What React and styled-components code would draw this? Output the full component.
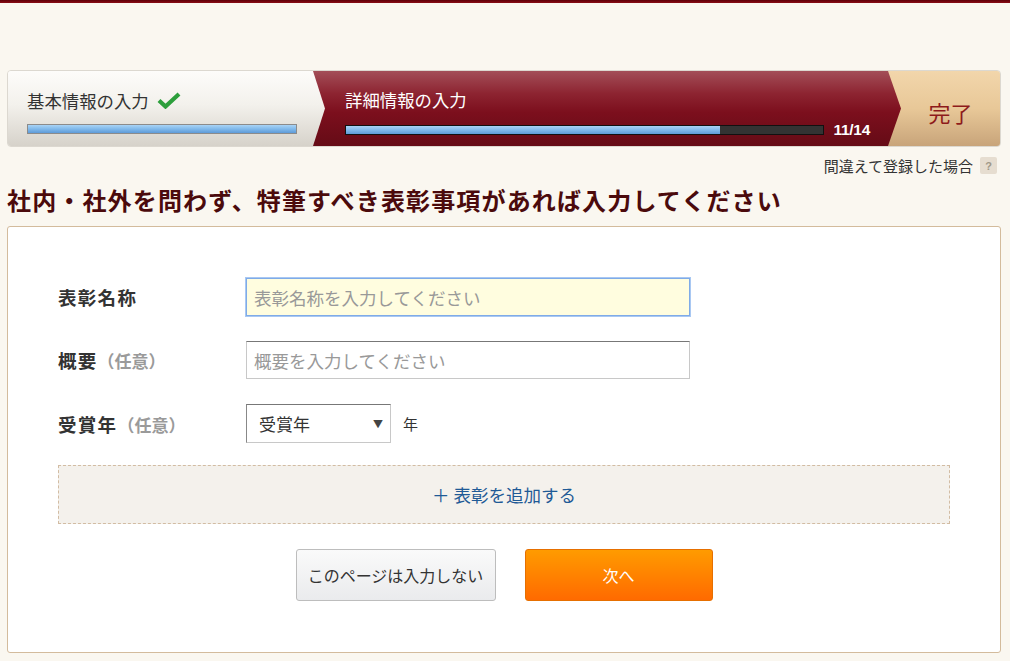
import React from 'react'
import styled, { createGlobalStyle } from 'styled-components'

const GlobalStyle = createGlobalStyle`
  html, body {
    margin: 0;
    padding: 0;
    background: #faf7f0;
  }
  body {
    font-family: "Noto Sans CJK JP", "Noto Sans", "Liberation Sans", sans-serif;
    color: #333;
  }
`

const App = () => {
    return (
        <>
            <GlobalStyle />
            <TopLine />
            <Page>
                <Steps>
                    <StepDone>
                        <StepTitle>
                            基本情報の入力
                            <Check viewBox="0 0 24 17">
                                <path d="M2 8.5 L8.5 14.5 L22 2" fill="none" stroke="#2d9f3c" strokeWidth="4.2" strokeLinejoin="miter" />
                            </Check>
                        </StepTitle>
                        <Bar $dark={false}>
                            <Fill style={{ width: '100%' }} />
                        </Bar>
                    </StepDone>
                    <StepCurrent>
                        <StepTitle $light>詳細情報の入力</StepTitle>
                        <BarRow>
                            <Bar $dark>
                                <Fill style={{ width: `${(11 / 14) * 100}%` }} />
                            </Bar>
                            <Count>11/14</Count>
                        </BarRow>
                    </StepCurrent>
                    <StepLast>完了</StepLast>
                </Steps>

                <HelpRow>
                    間違えて登録した場合
                    <HelpBadge>?</HelpBadge>
                </HelpRow>

                <Heading>社内・社外を問わず、特筆すべき表彰事項があれば入力してください</Heading>

                <Card>
                    <FormRow>
                        <Label>表彰名称</Label>
                        <TextInput $focused placeholder="表彰名称を入力してください" />
                    </FormRow>
                    <FormRow>
                        <Label>概要<Optional>（任意）</Optional></Label>
                        <TextInput placeholder="概要を入力してください" />
                    </FormRow>
                    <FormRow>
                        <Label>受賞年<Optional>（任意）</Optional></Label>
                        <SelectBox>
                            受賞年
                            <Caret>▼</Caret>
                        </SelectBox>
                        <Unit>年</Unit>
                    </FormRow>

                    <AddBox>＋ 表彰を追加する</AddBox>

                    <Buttons>
                        <SkipButton>このページは入力しない</SkipButton>
                        <NextButton>次へ</NextButton>
                    </Buttons>
                </Card>
            </Page>
        </>
    )
}

export default App


const TopLine = styled.div`
  height: 3px;
  background: linear-gradient(#5e0008, #8a0d16);
`

const Page = styled.div`
  width: 994px;
  margin-left: 7px;
  padding-top: 67px;
`

const Steps = styled.div`
  display: flex;
  height: 75px;
  border: 1px solid #dcd8d0;
  border-radius: 4px;
  overflow: hidden;
`

const StepDone = styled.div`
  position: relative;
  z-index: 3;
  width: 317px;
  flex-shrink: 0;
  box-sizing: border-box;
  padding: 17px 28px 0 19px;
  background: linear-gradient(#fdfcfa 0%, #f3f1ec 45%, #d6d2ca 100%);
  clip-path: polygon(0 0, calc(100% - 12px) 0, 100% 50%, calc(100% - 12px) 100%, 0 100%);
`

const StepCurrent = styled.div`
  position: relative;
  z-index: 2;
  flex: 1;
  margin-left: -12px;
  box-sizing: border-box;
  padding: 16px 31px 0 32px;
  background: linear-gradient(#a34e58 0%, #8d2431 30%, #7c0f1d 55%, #650b16 100%);
  clip-path: polygon(0 0, calc(100% - 13px) 0, 100% 50%, calc(100% - 13px) 100%, 0 100%);
`

const StepLast = styled.div`
  position: relative;
  z-index: 1;
  width: 112px;
  flex-shrink: 0;
  margin-left: -13px;
  box-sizing: border-box;
  padding: 6px 0 0 13px;
  display: flex;
  align-items: center;
  justify-content: center;
  font-size: 22px;
  color: #8e1b1b;
  background: linear-gradient(#f2d6ab 0%, #e8c898 50%, #c8a47a 100%);
`

const StepTitle = styled.div`
  display: flex;
  align-items: center;
  height: 24px;
  font-size: 17.4px;
  color: ${props => props.$light ? '#fff' : '#333'};
`

const Check = styled.svg`
  width: 24px;
  height: 17px;
  margin-left: 8px;
`

const BarRow = styled.div`
  display: flex;
  align-items: center;
  margin-top: 10px;
`

const Bar = styled.div`
  flex: 1;
  height: 10px;
  margin-top: ${props => props.$dark ? '0' : '12px'};
  box-sizing: border-box;
  border: 1px solid ${props => props.$dark ? '#111' : '#8b8b8b'};
  background: ${props => props.$dark ? '#333' : '#ddd'};
`

const Fill = styled.div`
  height: 100%;
  background: linear-gradient(#a9d3f5 0%, #84bcec 45%, #5e9bd8 100%);
`

const Count = styled.span`
  margin-left: 10px;
  font-family: "Liberation Sans", "Noto Sans", sans-serif;
  font-size: 15.5px;
  font-weight: bold;
  letter-spacing: -0.3px;
  color: #fff;
`

const HelpRow = styled.div`
  display: flex;
  justify-content: flex-end;
  align-items: center;
  margin-top: 9px;
  padding-right: 4px;
  height: 19px;
  font-size: 15px;
  color: #333;
`

const HelpBadge = styled.span`
  display: inline-flex;
  align-items: center;
  justify-content: center;
  width: 17px;
  height: 17px;
  margin-left: 7px;
  border-radius: 2px;
  background: #e6ddd0;
  color: #a09888;
  font-family: "Liberation Sans", sans-serif;
  font-size: 11px;
  font-weight: bold;
`

const Heading = styled.h1`
  margin: 9px 0 0 0;
  line-height: 32px;
  font-size: 24px;
  font-weight: bold;
  letter-spacing: 1.15px;
  color: #4b0a0c;
`

const Card = styled.div`
  margin-top: 10px;
  box-sizing: border-box;
  border: 1px solid #d3bb9c;
  border-radius: 3px;
  background: #fff;
  padding: 51px 50px 51px;
`

const FormRow = styled.div`
  display: flex;
  align-items: center;
  margin-bottom: 25px;
  &:nth-child(3) {
    margin-bottom: 22px;
  }
`

const Label = styled.div`
  width: 188px;
  flex-shrink: 0;
  font-size: 18.5px;
  font-weight: bold;
  letter-spacing: 1.3px;
  color: #333;
`

const Optional = styled.span`
  color: #9a9a9a;
  font-size: 17px;
  letter-spacing: 0;
`

const TextInput = styled.input`
  width: 444px;
  height: 38px;
  box-sizing: border-box;
  padding: 0 7px;
  font-family: inherit;
  font-size: 17.5px;
  color: #333;
  outline: none;
  border: 1px solid ${props => props.$focused ? '#7fabe8' : '#c8c8c8'};
  border-top-color: ${props => props.$focused ? '#7fabe8' : '#777'};
  background: ${props => props.$focused ? '#fffddf' : '#fff'};
  box-shadow: ${props => props.$focused ? '0 0 0 1px #a9c8f2' : 'none'};
  &::placeholder {
    color: #999;
  }
`

const SelectBox = styled.div`
  display: flex;
  align-items: center;
  justify-content: space-between;
  width: 145px;
  height: 39px;
  box-sizing: border-box;
  padding: 0 7px 0 12px;
  border: 1px solid #c8c8c8;
  border-top-color: #777;
  border-left-color: #888;
  font-size: 17px;
  color: #333;
`

const Caret = styled.span`
  font-size: 10px;
  color: #444;
`

const Unit = styled.span`
  margin-left: 12px;
  font-size: 15px;
  color: #333;
`

const AddBox = styled.div`
  display: flex;
  align-items: center;
  justify-content: center;
  height: 59px;
  box-sizing: border-box;
  border: 1px dashed #d2bca3;
  background: #f4f1ec;
  font-size: 17.5px;
  color: #1f5a96;
`

const Buttons = styled.div`
  display: flex;
  justify-content: center;
  gap: 29px;
  margin-top: 25px;
`

const SkipButton = styled.button`
  width: 200px;
  height: 52px;
  border: 1px solid #bdbdbd;
  border-radius: 3px;
  background: linear-gradient(#fafafa, #eaebed);
  font-family: inherit;
  font-size: 16px;
  color: #333;
`

const NextButton = styled.button`
  width: 188px;
  height: 52px;
  border: 1px solid #e66f00;
  border-radius: 3px;
  background: linear-gradient(#ff9b00, #ff6a00);
  font-family: inherit;
  font-size: 16px;
  color: #fff;
`
